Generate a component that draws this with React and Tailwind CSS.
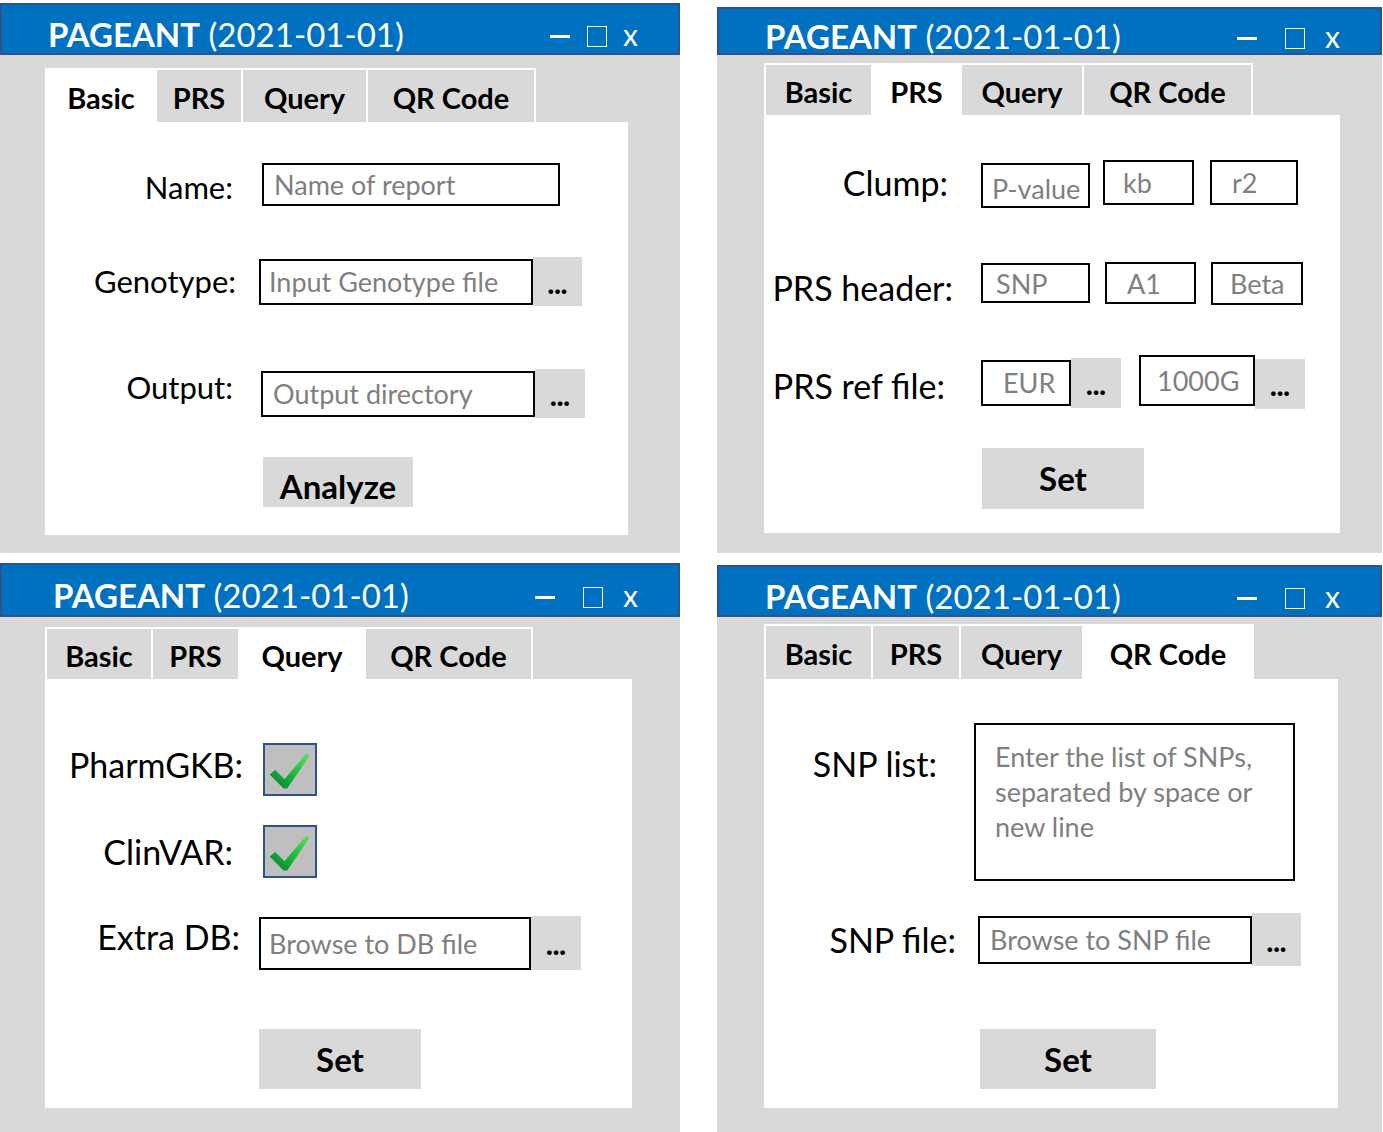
import React from 'react';
import { clsx } from 'clsx';

const TAB_NAMES = ['Basic', 'PRS', 'Query', 'QR Code'];

const TitleBar = ({ className, pl = 'pl-[46px]', tight = false }) => (
    <div
        className={clsx(
            'bg-[#0070C0] border-2 border-[#2F528F] flex items-center justify-between pr-[40px] pt-[10px] text-white leading-none',
            pl,
            className
        )}
    >
        <div className="text-[33px] whitespace-nowrap">
            <span className="font-bold">PAGEANT</span> (2021-01-01)
        </div>
        <div className="flex items-center">
            <div className="w-[20px] h-[3px] bg-white mt-[4px]" />
            <div className={clsx('w-[20px] h-[21px] border-[1.5px] border-white mt-[4px]', tight ? 'ml-[17px]' : 'ml-[28px]')} />
            <span className={clsx('text-[30px]', tight ? 'ml-[16px]' : 'ml-[20px]')}>x</span>
        </div>
    </div>
);

// tabs strip: white outline around grey tabs, active one merges into the page
const Tabs = ({ active, widths, height }) => (
    <div className="flex w-fit bg-white gap-[2px] pt-[2px] px-[2px]">
        {TAB_NAMES.map((name, i) => (
            <div
                key={name}
                className={clsx(
                    'flex items-center justify-center text-[29px] font-bold leading-none pt-[2px]',
                    widths[i],
                    height,
                    i === active ? 'bg-white' : 'bg-[#D9D9D9]'
                )}
            >
                {name}
            </div>
        ))}
    </div>
);

const Field = ({ className, children }) => (
    <div className={clsx('border-2 border-black bg-white flex items-center text-[#7F7F7F] text-[27px] leading-none whitespace-nowrap', className)}>
        {children}
    </div>
);

const Dots = ({ className }) => (
    <div className={clsx('bg-[#D9D9D9] flex items-center justify-center font-black text-[28px] leading-none pt-[2px]', className)}>
        ...
    </div>
);

const Label = ({ className, children }) => (
    <div className={clsx('text-right leading-none whitespace-nowrap', className)}>{children}</div>
);

const BigButton = ({ className, children }) => (
    <div className={clsx('bg-[#D9D9D9] flex items-center justify-center font-bold text-[33px] leading-none', className)}>
        {children}
    </div>
);

const Check = () => (
    <div className="w-[54px] h-[53px] bg-[#BFBFBF] border-2 border-[#2F528F] flex items-center justify-center">
        <svg width="50" height="49" viewBox="0 0 54 53">
            <defs>
                <linearGradient id="chk" x1="1" y1="0" x2="0" y2="1">
                    <stop offset="0" stopColor="#5CE65C" />
                    <stop offset="0.5" stopColor="#1DB83A" />
                    <stop offset="1" stopColor="#00802B" />
                </linearGradient>
            </defs>
            <polygon points="5,32 11,27 21,37 45,9 48,12 24,47 20,47" fill="url(#chk)" />
        </svg>
    </div>
);

const BasicPanel = () => (
    <div className="pt-[3px] flex flex-col">
        <TitleBar className="h-[52px]" tight />
        <div className="flex-1 bg-[#D9D9D9] pt-[13px] pl-[45px] pb-[18px] flex flex-col">
            <Tabs active={0} widths={['w-[108px]', 'w-[84px]', 'w-[123px]', 'w-[166px]']} height="h-[52px]" />
            <div className="w-[583px] h-[413px] bg-white flex flex-col text-[31px]">
                <div className="flex items-center mt-[41px]">
                    <Label className="w-[188px] mt-[6px]">Name:</Label>
                    <Field className="ml-[29px] w-[298px] h-[43px] pl-[10px]">Name of report</Field>
                </div>
                <div className="flex items-center mt-[51px]">
                    <Label className="w-[191px]">Genotype:</Label>
                    <Field className="ml-[23px] w-[274px] h-[46px] pl-[8px]">Input Genotype file</Field>
                    <Dots className="w-[49px] h-[49px]" />
                </div>
                <div className="flex items-center mt-[63px]">
                    <Label className="w-[188px] -mt-[12px]">Output:</Label>
                    <Field className="ml-[28px] w-[274px] h-[46px] pl-[10px]">Output directory</Field>
                    <Dots className="w-[50px] h-[49px]" />
                </div>
                <BigButton className="mt-[39px] ml-[218px] w-[150px] h-[50px] pt-[8px]">Analyze</BigButton>
            </div>
        </div>
    </div>
);

const PrsPanel = () => (
    <div className="pt-[7px] flex flex-col">
        <TitleBar className="h-[48px]" />
        <div className="flex-1 bg-[#D9D9D9] pt-[8px] pl-[47px] pb-[20px] flex flex-col">
            <Tabs active={1} widths={['w-[105px]', 'w-[87px]', 'w-[120px]', 'w-[167px]']} height="h-[50px]" />
            <div className="w-[576px] h-[418px] bg-white flex flex-col text-[34px]">
                <div className="flex items-center mt-[42px]">
                    <Label className="w-[184px]">Clump:</Label>
                    <Field className="ml-[33px] w-[109px] h-[45px] pl-[9px] mt-[6px] pt-[6px] text-[26px]">P-value</Field>
                    <Field className="ml-[13px] w-[91px] h-[45px] pl-[18px]">kb</Field>
                    <Field className="ml-[16px] w-[88px] h-[45px] pl-[20px]">r2</Field>
                </div>
                <div className="flex items-center mt-[53px]">
                    <Label className="w-[189px] mt-[10px]">PRS header:</Label>
                    <Field className="ml-[28px] w-[109px] h-[40px] pl-[13px]">SNP</Field>
                    <Field className="ml-[15px] w-[91px] h-[42px] pl-[20px]">A1</Field>
                    <Field className="ml-[15px] w-[92px] h-[43px] pl-[17px]">Beta</Field>
                </div>
                <div className="flex items-center mt-[51px]">
                    <Label className="w-[181px] mt-[6px]">PRS ref file:</Label>
                    <Field className="ml-[36px] w-[90px] h-[46px] pl-[20px]">EUR</Field>
                    <Dots className="w-[50px] h-[50px]" />
                    <Field className="ml-[18px] w-[116px] h-[51px] pl-[16px] -mt-[4px]">1000G</Field>
                    <Dots className="w-[50px] h-[50px] mt-[3px]" />
                </div>
                <BigButton className="mt-[39px] ml-[218px] w-[162px] h-[61px]">Set</BigButton>
            </div>
        </div>
    </div>
);

const QueryPanel = () => (
    <div className="pt-[10px] flex flex-col">
        <TitleBar className="h-[54px]" pl="pl-[51px]" />
        <div className="flex-1 bg-[#D9D9D9] pt-[10px] pl-[45px] pb-[24px] flex flex-col">
            <Tabs active={2} widths={['w-[104px]', 'w-[85px]', 'w-[124px]', 'w-[165px]']} height="h-[50px]" />
            <div className="w-[587px] h-[429px] bg-white flex flex-col text-[34px]">
                <div className="flex items-center mt-[64px]">
                    <Label className="w-[198px] -mt-[10px]">PharmGKB:</Label>
                    <div className="ml-[20px]"><Check /></div>
                </div>
                <div className="flex items-center mt-[29px]">
                    <Label className="w-[188px]">ClinVAR:</Label>
                    <div className="ml-[30px]"><Check /></div>
                </div>
                <div className="flex items-center mt-[38px]">
                    <Label className="w-[195px] -mt-[12px]">Extra DB:</Label>
                    <Field className="ml-[19px] w-[272px] h-[53px] pl-[8px]">Browse to DB file</Field>
                    <Dots className="w-[50px] h-[54px]" />
                </div>
                <BigButton className="mt-[59px] ml-[214px] w-[162px] h-[60px]">Set</BigButton>
            </div>
        </div>
    </div>
);

const QrPanel = () => (
    <div className="pt-[12px] flex flex-col">
        <TitleBar className="h-[52px]" />
        <div className="flex-1 bg-[#D9D9D9] pt-[7px] pl-[47px] pb-[24px] flex flex-col">
            <Tabs active={3} widths={['w-[105px]', 'w-[86px]', 'w-[121px]', 'w-[168px]']} height="h-[53px]" />
            <div className="w-[574px] h-[429px] bg-white flex flex-col text-[34px]">
                <div className="flex items-start mt-[44px]">
                    <Label className="w-[173px] mt-[24px]">SNP list:</Label>
                    <div className="ml-[37px] w-[321px] h-[158px] border-2 border-black pl-[19px] pt-[14px] text-[27px] leading-[35px] text-[#7F7F7F] whitespace-nowrap">
                        Enter the list of SNPs,
                        <br />
                        separated by space or
                        <br />
                        new line
                    </div>
                </div>
                <div className="flex items-center mt-[32px]">
                    <Label className="w-[192px]">SNP file:</Label>
                    <Field className="ml-[22px] w-[274px] h-[48px] pl-[10px]">Browse to SNP file</Field>
                    <Dots className="w-[49px] h-[53px]" />
                </div>
                <BigButton className="mt-[63px] ml-[216px] w-[176px] h-[60px]">Set</BigButton>
            </div>
        </div>
    </div>
);

const App = () => (
    <div className="w-[1383px] h-[1132px] bg-white overflow-hidden font-['Lato',sans-serif] text-black grid grid-cols-[680px_665px] grid-rows-[553px_579px] gap-x-[37px]">
        <BasicPanel />
        <PrsPanel />
        <QueryPanel />
        <QrPanel />
    </div>
);

export default App;
